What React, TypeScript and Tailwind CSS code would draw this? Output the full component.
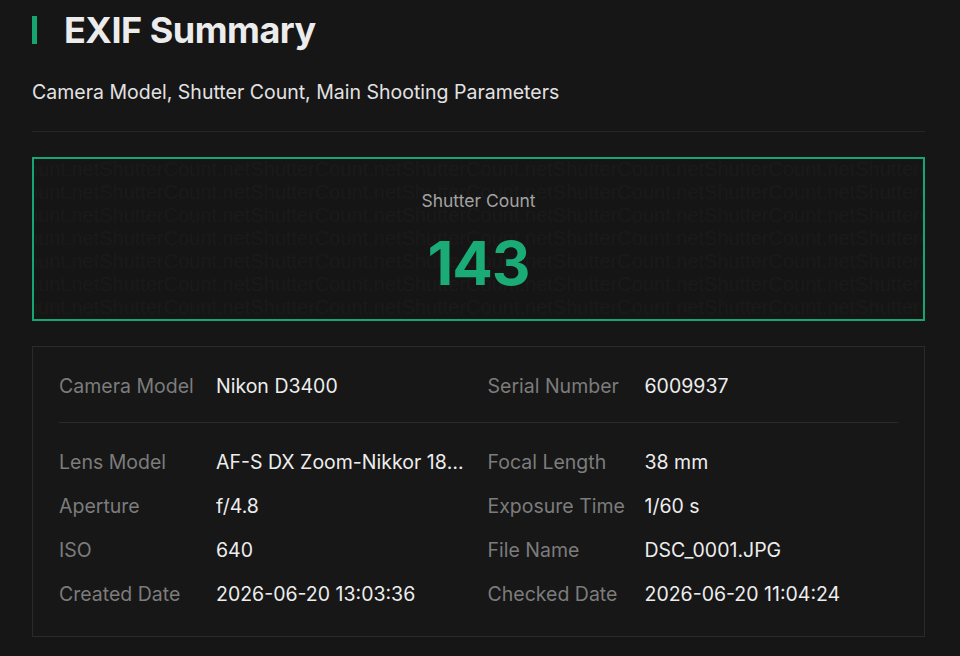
import React from 'react';

const rows: [string, string, string, string][] = [
    ['Lens Model', 'AF-S DX Zoom-Nikkor 18-55mm f/3.5-5.6G ED', 'Focal Length', '38 mm'],
    ['Aperture', 'f/4.8', 'Exposure Time', '1/60 s'],
    ['ISO', '640', 'File Name', 'DSC_0001.JPG'],
    ['Created Date', '2026-06-20 13:03:36', 'Checked Date', '2026-06-20 11:04:24'],
];

function Field({ label, value }: { label: string; value: string }) {
    return (
        <div className="flex items-center h-11 min-w-0">
            <span className="w-[157px] shrink-0 text-[#7c7c7c]">{label}</span>
            <span className="truncate text-[#ededed]">{value}</span>
        </div>
    );
}

// Faint repeated brand text behind the counter
function Watermark() {
    const line = 'ShutterCount.net'.repeat(8);
    return (
        <div className="absolute inset-0 overflow-hidden pointer-events-none select-none">
            <div className="-mt-px -ml-[86px]">
                {Array.from({ length: 7 }).map((_, i) => (
                    <div
                        key={i}
                        className="whitespace-nowrap text-[20px] leading-[23px] text-[#1a1a1a]"
                        style={{ fontFamily: '"Liberation Sans", Arial, sans-serif' }}
                    >
                        {line}
                    </div>
                ))}
            </div>
        </div>
    );
}

export default function App() {
    return (
        <div
            className="min-h-[656px] bg-[#161616] pl-8 pr-[35px] pt-[8px] pb-5"
            style={{ fontFamily: 'Inter, "Noto Sans", sans-serif' }}
        >
            {/* Header */}
            <div className="flex items-center gap-[27px]">
                <div className="w-[5px] h-[28px] bg-[#16a571]" />
                <h1 className="text-[36px] leading-[44px] font-bold tracking-[-0.5px] text-[#ececec]">
                    EXIF Summary
                </h1>
            </div>
            <p className="mt-[26px] text-[19.5px] leading-[28px] text-[#e2e2e2]">
                Camera Model, Shutter Count, Main Shooting Parameters
            </p>
            <div className="mt-[25px] h-px bg-[#262626]" />

            {/* Shutter count */}
            <div className="relative mt-[25px] h-[164px] border-2 border-[#17a672] bg-[#151515]">
                <Watermark />
                <div className="relative flex flex-col items-center pt-[30px]">
                    <span className="text-[17.5px] leading-6 text-[#a3a3a3]">Shutter Count</span>
                    <span className="mt-[14px] text-[60px] leading-[72px] font-bold text-[#1aab76] tracking-[-1px]">
                        143
                    </span>
                </div>
            </div>

            {/* EXIF details */}
            <div className="mt-[25px] border border-[#2a2a2a] bg-[#171717] px-[26px] pt-[18px] pb-[19px] text-[19.5px]">
                <div className="grid grid-cols-2 gap-x-[18px] border-b border-[#2a2a2a] pb-[13px]">
                    <Field label="Camera Model" value="Nikon D3400" />
                    <Field label="Serial Number" value="6009937" />
                </div>
                <div className="mt-[18px] grid grid-cols-2 gap-x-[18px]">
                    {rows.map(([l1, v1, l2, v2]) => (
                        <React.Fragment key={l1}>
                            <Field label={l1} value={v1} />
                            <Field label={l2} value={v2} />
                        </React.Fragment>
                    ))}
                </div>
            </div>
        </div>
    );
}
